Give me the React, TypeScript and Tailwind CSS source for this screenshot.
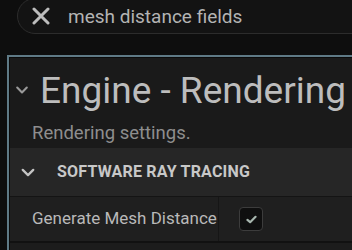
import React from 'react';

const Chevron: React.FC<{ className?: string }> = ({ className }) => (
  <svg viewBox="0 0 16 10" className={className} fill="none" stroke="currentColor" strokeWidth={2.6} strokeLinecap="round" strokeLinejoin="round">
    <path d="M2 2l6 6 6-6" />
  </svg>
);

const App: React.FC = () => {
  return (
    <div className="w-[352px] h-[250px] overflow-hidden bg-[#0e0e0e]" style={{ fontFamily: 'Roboto, "Noto Sans", sans-serif' }}>
      {/* search */}
      <div className="ml-[17px] -mt-[2px] w-[360px] h-[36px] rounded-full border border-[#2c2c2c] bg-[#131313] flex items-center">
        <svg viewBox="0 0 18 18" className="ml-[14px] w-[18px] h-[18px] text-[#bcbcbc]" stroke="currentColor" strokeWidth={3} strokeLinecap="round">
          <path d="M2 2l14 14M16 2L2 16" />
        </svg>
        <span className="ml-[18px] text-[19px] leading-none text-[#b4b4b4] mt-[1px]">mesh distance fields</span>
      </div>

      {/* panel */}
      <div className="mt-[21px] ml-[7px] border-t-[2px] border-l-[2px] border-[#5f7a86] bg-[#1a1a1a]">
        <div className="border-t border-l border-[#0b0b0b]">
          <div className="flex items-center h-[60px] pt-[4px]">
            <Chevron className="ml-[5px] w-[14px] h-[8px] text-[#9a9a9a]" />
            <span className="ml-[11px] text-[37px] leading-none text-[#bdbdbd] whitespace-nowrap">Engine - Rendering</span>
          </div>
          <div className="h-[30px] pl-[22px] pt-[6px] text-[18.5px] leading-none text-[#8e8e8e]">Rendering settings.</div>
          <div className="h-[48px] bg-[#262626] flex items-center">
            <Chevron className="ml-[11px] w-[14px] h-[9px] text-[#c4c4c4]" />
            <span className="ml-[22px] text-[16px] font-bold text-[#c8c8c8] tracking-[0.2px]">SOFTWARE RAY TRACING</span>
          </div>
          <div className="h-[1px] bg-[#141414]" />
          <div className="h-[44px] bg-[#1f1f1f] flex items-center">
            <div className="w-[209px] h-full flex items-center border-r border-[#161616]">
              <span className="ml-[22px] text-[17px] text-[#b9b9b9] whitespace-nowrap">Generate Mesh Distance</span>
            </div>
            <div className="ml-[20px] w-[24px] h-[24px] rounded-[4px] bg-[#0f0f0f] border border-[#3c3c3c] flex items-center justify-center">
              <svg viewBox="0 0 12 10" className="w-[11px] h-[9px] text-[#a7b6ae]" fill="none" stroke="currentColor" strokeWidth={2.4} strokeLinecap="round" strokeLinejoin="round">
                <path d="M1.5 5.5l3 2.5 6-6" />
              </svg>
            </div>
          </div>
          <div className="h-[2px] bg-[#111111]" />
          <div className="h-[20px] bg-[#1c1c1c]" />
        </div>
      </div>
    </div>
  );
};

export default App;
